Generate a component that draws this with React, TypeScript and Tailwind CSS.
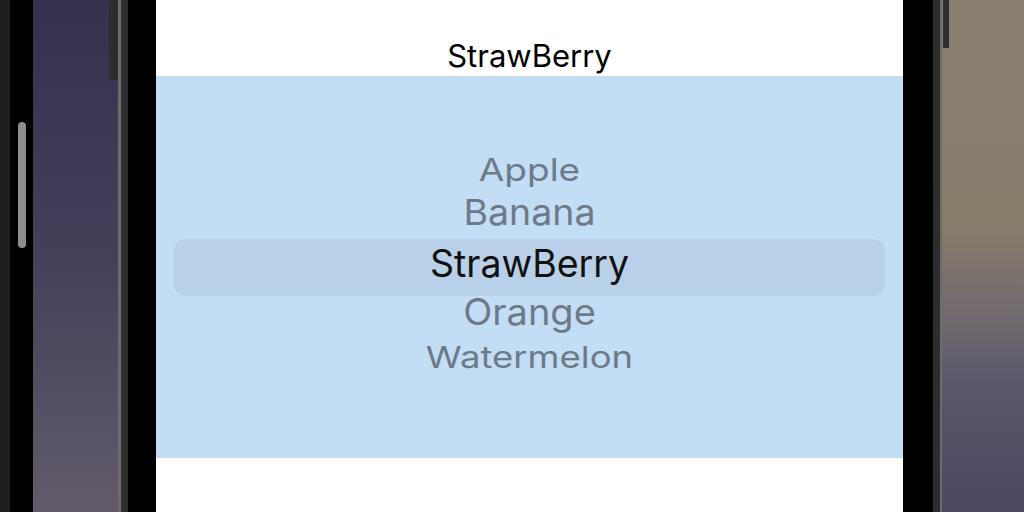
import React from "react";

const fruits = [
  { name: "Apple", row: "h-[40px]", text: "text-[37px] scale-y-[0.85]" },
  { name: "Banana", row: "h-[47px]", text: "text-[37.5px] scale-y-[0.96]" },
  { name: "StrawBerry", row: "h-[57px] mt-[3px]", text: "text-[37.5px] -translate-y-[4px]" },
  { name: "Orange", row: "h-[32px]", text: "text-[38px] scale-y-[0.96]" },
  { name: "Watermelon", row: "h-[59px]", text: "text-[36.5px] scale-y-[0.82]" },
];

export default function App() {
  const selected = "StrawBerry";

  return (
    <div className="flex h-[512px] w-[1024px] overflow-hidden bg-black font-['Inter',sans-serif]">
      {/* linker Rand */}
      <div className="w-[10px] bg-[#1f1f1f]" />
      <div className="flex w-[23px] justify-center bg-black pt-[122px]">
        <div className="h-[126px] w-[8px] rounded-full bg-[#8d8d8d]" />
      </div>
      <div className="flex w-[85px] justify-end bg-gradient-to-b from-[#36304f] via-[#44405a] to-[#615b69]">
        <div className="h-[80px] w-[9px] bg-[#2e2e31]" />
      </div>
      <div className="w-[3px] bg-[#6c6c6c]" />
      <div className="w-[7px] bg-[#2d2d2d]" />
      <div className="w-[28px] bg-black" />

      {/* Bildschirm */}
      <div className="flex w-[747px] flex-col bg-white">
        <div className="flex h-[76px] items-end justify-center pb-[5px]">
          <span className="text-[31px] leading-none text-black">{selected}</span>
        </div>
        <div className="flex h-[382px] flex-col items-stretch bg-[#c3ddf5] px-[18px] pt-[73px]">
          {fruits.map((f) =>
            f.name === selected ? (
              <div
                key={f.name}
                className={`flex ${f.row} items-center justify-center rounded-[12px] bg-[#b8d0e8]`}
              >
                <span className={`${f.text} leading-none text-[#111]`}>{f.name}</span>
              </div>
            ) : (
              <div key={f.name} className={`flex ${f.row} items-center justify-center`}>
                <span className={`${f.text} leading-none text-[#6d7a88]`}>{f.name}</span>
              </div>
            )
          )}
        </div>
        <div className="flex-1 bg-white" />
      </div>

      {/* rechter Rand */}
      <div className="w-[30px] bg-black" />
      <div className="w-[7px] bg-[#2d2d2d]" />
      <div className="w-[2px] bg-[#6c6c6c]" />
      <div className="flex flex-1 bg-[linear-gradient(to_bottom,#8b7f70_0%,#877b6a_45%,#71696f_62%,#5a576b_75%,#4a4961_100%)]">
        <div className="ml-[1px] h-[48px] w-[6px] bg-[#2e2e30]" />
      </div>
    </div>
  );
}
